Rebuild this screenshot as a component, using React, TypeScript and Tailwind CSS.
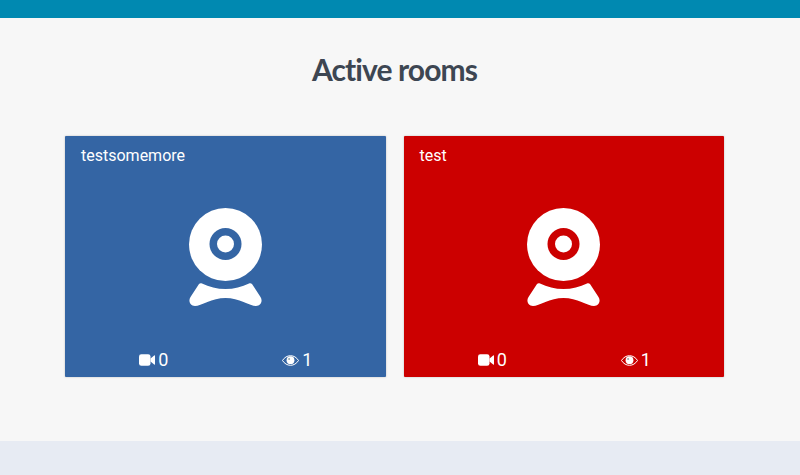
const Webcam = ({ color }: { color: string }) => (
  <svg width="73" height="98" viewBox="0 0 73 98" className="block">
    <circle cx="36.5" cy="36.5" r="36.5" fill="#fff" />
    <circle cx="36.5" cy="36" r="16" fill={color} />
    <circle cx="36.5" cy="36" r="8.5" fill="#fff" />
    <path d="M13 75.5 C20 79 28 81 36.5 81 C45 81 53 79 60 75.5 C61 75 62 75 63 76 L71.5 89 C74 93 72 98 67 98 C61 98 50 90 36.5 90 C23 90 12 98 6 98 C1 98 -1 93 1.5 89 L10 76 C11 75 12 75 13 75.5 Z" fill="#fff" />
  </svg>
);

const VideoIcon = () => (
  <svg width="16" height="12" viewBox="0 0 16 12" className="block">
    <rect x="0" y="0.2" width="11.5" height="11.6" rx="2.4" fill="#fff" />
    <path d="M11.5 4.4 L15.2 1.4 C15.6 1.1 16 1.3 16 1.8 V10.2 C16 10.7 15.6 10.9 15.2 10.6 L11.5 7.6 Z" fill="#fff" />
  </svg>
);

const EyeIcon = () => (
  <svg width="17" height="11" viewBox="0 0 17 11" className="block">
    <path d="M0.5 5.5 C2.5 2.3 5.3 0.7 8.5 0.7 C11.7 0.7 14.5 2.3 16.5 5.5 C14.5 8.7 11.7 10.3 8.5 10.3 C5.3 10.3 2.5 8.7 0.5 5.5 Z" fill="none" stroke="#fff" strokeWidth="1" />
    <circle cx="8.5" cy="5.2" r="3.9" fill="#fff" />
    <circle cx="7.1" cy="3.9" r="1" fill="#9aa" />
  </svg>
);

const Room = ({ name, color, bg }: { name: string; color: string; bg: string }) => (
  <div className={`flex h-[241px] flex-1 flex-col rounded-[1px] ${bg} text-white shadow-[0_0_2px_rgba(0,0,0,0.25)]`}>
    <div className="pl-4 pt-[9px] text-[16px] leading-[22px] font-['Roboto',sans-serif]">{name}</div>
    <div className="mt-[41px] flex justify-center">
      <Webcam color={color} />
    </div>
    <div className="mt-[44px] flex justify-center gap-[114px] pl-[1px] font-['Roboto',sans-serif] text-[18px] leading-[20px]">
      <div className="flex items-center gap-[3px]">
        <VideoIcon />
        <span>0</span>
      </div>
      <div className="flex items-center gap-[3px]">
        <EyeIcon />
        <span>1</span>
      </div>
    </div>
  </div>
);

export default function App() {
  return (
    <div className="flex h-[475px] w-full flex-col bg-[#f7f7f7]">
      <div className="h-[18px] shrink-0 bg-[#0089b1]" />
      <main className="flex-1 pl-[65px] pr-[76px]">
        <h1 className="ml-[-65px] mr-[-65px] pt-[30px] text-center font-['Lato',sans-serif] text-[30px] leading-[42px] font-bold tracking-[-0.9px] text-[#3d4652]">
          Active rooms
        </h1>
        <div className="mt-[46px] flex gap-[18px]">
          <Room name="testsomemore" color="#3465a4" bg="bg-[#3465a4]" />
          <Room name="test" color="#cc0000" bg="bg-[#cc0000]" />
        </div>
      </main>
      <div className="h-[34px] shrink-0 bg-[#e7ebf3]" />
    </div>
  );
}
